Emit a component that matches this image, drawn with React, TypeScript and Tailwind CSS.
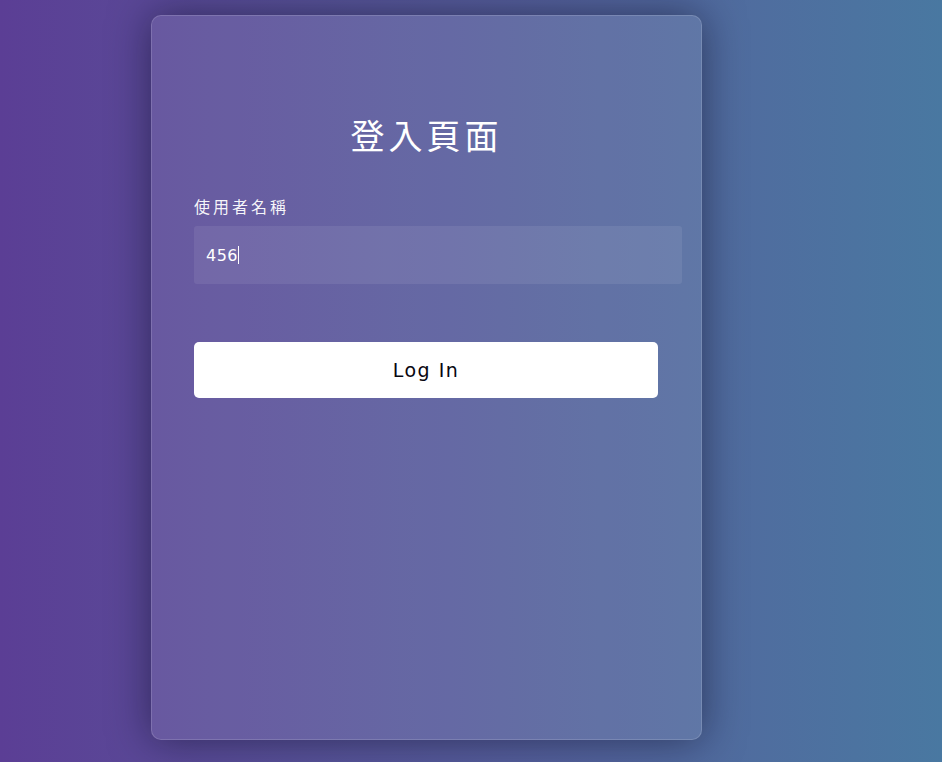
import React, { useState } from 'react';

const font = '[font-family:"DejaVu_Sans","Noto_Sans_CJK_TC",sans-serif]';

const App = () => {
  const [username, setUsername] = useState('456');

  return (
    <div
      className="min-h-[762px] w-full bg-gradient-to-r from-[#5b3e95] to-[#4978a1] flex pt-[15px] pl-[151px]"
      style={{ fontFamily: '"DejaVu Sans", "Noto Sans CJK TC", sans-serif' }}
    >
      <form
        className="w-[551px] h-[725px] rounded-[10px] border border-white/15 bg-white/[0.09] shadow-[0_0_40px_rgba(8,7,30,0.5)] px-[42px] pt-[100px] flex flex-col"
        onSubmit={(e) => e.preventDefault()}
      >
        <h3 className="text-center text-white text-[34px] leading-[42px] tracking-[4px] font-normal">
          登入頁面
        </h3>
        <label
          htmlFor="username"
          className="mt-[38px] text-[16px] leading-[24px] tracking-[3px] text-white/95 font-normal"
        >
          使用者名稱
        </label>
        <div className="relative mt-[6px] w-[488px] h-[58px]">
          <input
            id="username"
            value={username}
            onChange={(e) => setUsername(e.target.value)}
            className={`${font} w-full h-full rounded-[3px] bg-white/[0.08] px-[12px] text-[16px] tracking-[0.5px] text-white outline-none caret-white`}
          />
          <span className="absolute left-[44px] top-[20px] h-[18px] w-px bg-white" />
        </div>
        <button
          type="submit"
          className="mt-[58px] w-[464px] h-[56px] rounded-[5px] bg-white text-[#080710] text-[19px] tracking-[1.5px] font-medium"
        >
          Log In
        </button>
      </form>
    </div>
  );
};

export default App;
